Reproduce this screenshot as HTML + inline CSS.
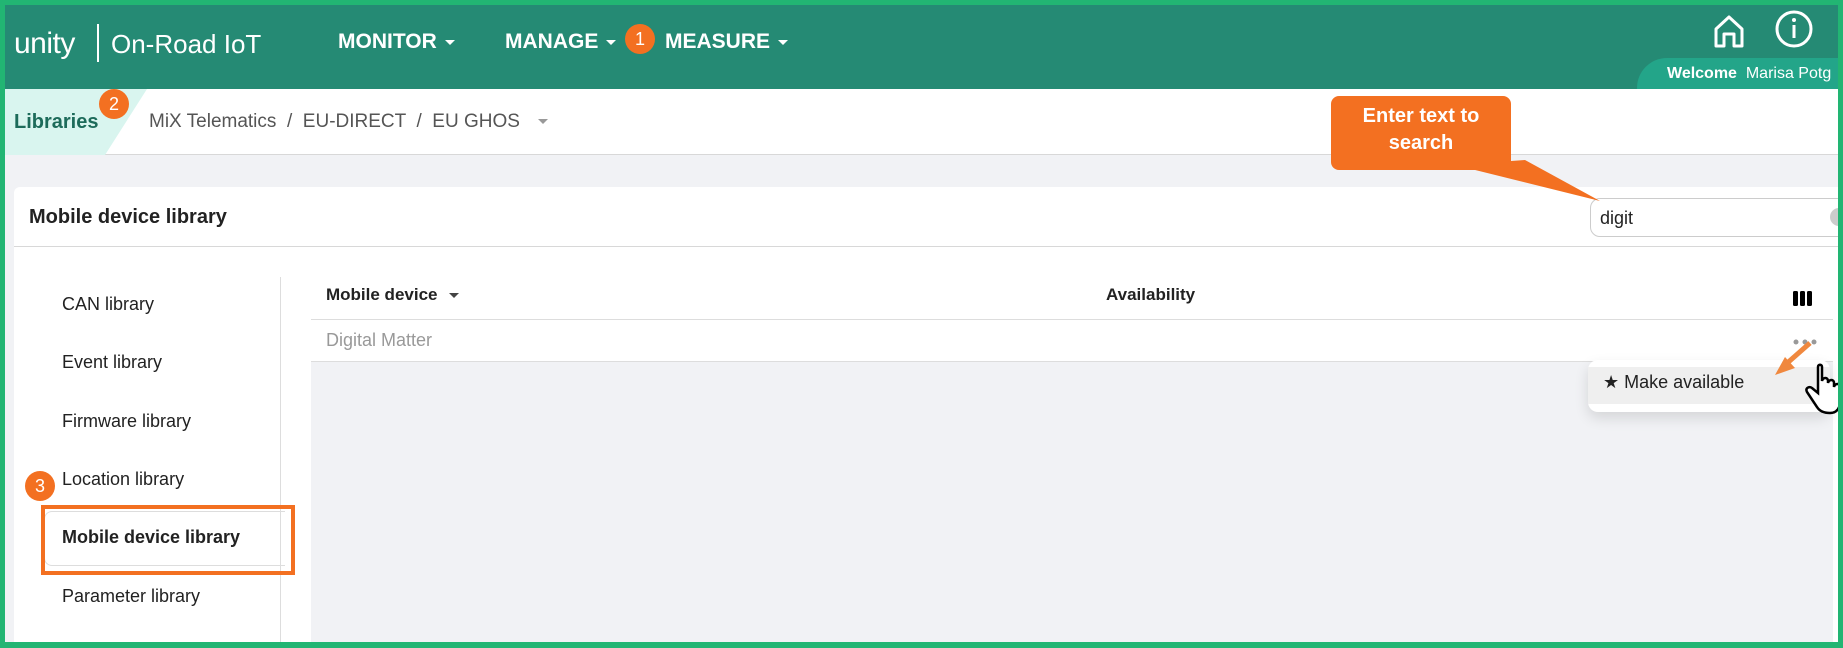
<!DOCTYPE html>
<html><head><meta charset="utf-8"><style>
*{margin:0;padding:0;box-sizing:border-box}
body{width:1843px;height:648px;overflow:hidden;background:#22b573;font-family:"Liberation Sans",sans-serif;position:relative}
.a{position:absolute}
#in{left:5px;top:5px;width:1833px;height:637px;background:#f1f2f5;overflow:hidden}
.hdr{left:0;top:0;width:1833px;height:84px;background:#258a74}
.nav{color:#fff;font-weight:bold;font-size:21px;top:25px}
.car{display:inline-block;border-left:5px solid transparent;border-right:5px solid transparent;border-top:5px solid #fff;vertical-align:middle;margin-left:8px}
.badge{width:30px;height:30px;border-radius:50%;background:#f37021;color:#fff;font-size:18px;text-align:center;line-height:30px}
.li{left:57px;font-size:18px;color:#222}
</style></head><body>
<div id="in" class="a">
<div class="a hdr"></div>
<div class="a" style="left:9px;top:22px;color:#fff;font-size:30px;letter-spacing:-0.5px">unity</div>
<div class="a" style="left:92px;top:19px;width:2px;height:38px;background:#fff"></div>
<div class="a" style="left:106px;top:24px;color:#fff;font-size:26px">On-Road IoT</div>
<div class="a nav" style="left:333px">MONITOR<span class="car"></span></div>
<div class="a nav" style="left:500px">MANAGE<span class="car"></span></div>
<div class="a badge" style="left:620px;top:19px">1</div>
<div class="a nav" style="left:660px">MEASURE<span class="car"></span></div>
<svg class="a" style="left:1706px;top:8px" width="36" height="36" viewBox="0 0 36 36"><path d="M5 16 L18 4 L31 16 V33 H23 V21 H13 V33 H5 Z" fill="none" stroke="#fff" stroke-width="3" stroke-linejoin="round"/></svg>
<svg class="a" style="left:1769px;top:4px" width="40" height="40" viewBox="0 0 40 40"><circle cx="20" cy="20" r="17" fill="none" stroke="#fff" stroke-width="3"/><rect x="18.5" y="16" width="3" height="13" fill="#fff"/><circle cx="20" cy="11" r="2" fill="#fff"/></svg>
<div class="a" style="left:1632px;top:53px;width:210px;height:32px;background:#23a589;border-top-left-radius:30px"></div>
<div class="a" style="left:1662px;top:60px;color:#fff;font-size:16px;white-space:nowrap"><b>Welcome</b>&nbsp; Marisa Potg</div>
<div class="a" style="left:0;top:84px;width:1833px;height:66px;background:#fff;border-bottom:1px solid #d8d8d8"></div>
<svg class="a" style="left:0;top:84px" width="150" height="66"><polygon points="0,0 142,0 100,66 0,66" fill="#d9f5ef"/></svg>
<div class="a" style="left:9px;top:106px;font-size:20px;font-weight:bold;color:#1d6b5a">Libraries</div>
<div class="a badge" style="left:94px;top:84px">2</div>
<div class="a" style="left:144px;top:106px;font-size:19px;color:#555;white-space:nowrap">MiX Telematics &nbsp;/&nbsp; EU-DIRECT &nbsp;/&nbsp; EU GHOS &nbsp;<span class="car" style="border-top-color:#999"></span></div>
<div class="a" style="left:9px;top:182px;width:1830px;height:470px;background:#fff;border-radius:6px"></div>
<div class="a" style="left:9px;top:241px;width:1830px;height:1px;background:#d8d8d8"></div>
<div class="a" style="left:24px;top:201px;font-size:20px;font-weight:bold;color:#222">Mobile device library</div>
<div class="a" style="left:1585px;top:193px;width:260px;height:39px;border:1px solid #ccc;border-radius:10px;background:#fff"></div>
<div class="a" style="left:1595px;top:203px;font-size:18px;color:#222">digit</div>
<div class="a" style="left:1825px;top:203px;width:18px;height:18px;border-radius:50%;background:#ccc"></div>
<svg class="a" style="left:1310px;top:85px" width="290" height="120"><polygon points="210,70 285,111 140,75" fill="#f37021"/><rect x="16" y="6" width="180" height="74" rx="8" fill="#f37021"/></svg>
<div class="a" style="left:1326px;top:98px;width:180px;text-align:center;color:#fff;font-weight:bold;font-size:20px;line-height:27px">Enter text to<br>search</div>
<div class="a" style="left:275px;top:272px;width:1px;height:370px;background:#ddd"></div>
<div class="a li" style="top:289px">CAN library</div>
<div class="a li" style="top:347px">Event library</div>
<div class="a li" style="top:406px">Firmware library</div>
<div class="a li" style="top:464px">Location library</div>
<div class="a" style="left:39px;top:506px;width:241px;height:55px;border:1px solid #ddd;border-right:none;border-radius:8px 0 0 8px"></div>
<div class="a li" style="top:522px;font-weight:bold">Mobile device library</div>
<div class="a li" style="top:581px">Parameter library</div>
<div class="a" style="left:36px;top:500px;width:254px;height:70px;border:4px solid #f37021"></div>
<div class="a badge" style="left:20px;top:466px">3</div>
<div class="a" style="left:306px;top:357px;width:1522px;height:290px;background:#f1f2f5"></div>
<div class="a" style="left:321px;top:280px;font-size:17px;font-weight:bold;color:#222">Mobile device<span class="car" style="border-top-color:#444;margin-left:12px"></span></div>
<div class="a" style="left:1101px;top:280px;font-size:17px;font-weight:bold;color:#222">Availability</div>
<svg class="a" style="left:1788px;top:286px" width="20" height="15"><rect x="0" y="0" width="5" height="15" rx="1.5"/><rect x="7" y="0" width="5" height="15" rx="1.5"/><rect x="14" y="0" width="5" height="15" rx="1.5"/></svg>
<div class="a" style="left:306px;top:314px;width:1522px;height:1px;background:#ddd"></div>
<div class="a" style="left:306px;top:315px;width:1522px;height:42px;background:#fff;border-bottom:1px solid #ddd"></div>
<div class="a" style="left:321px;top:325px;font-size:18px;color:#999">Digital Matter</div>
<svg class="a" style="left:1787px;top:333px" width="26" height="8"><circle cx="4" cy="4" r="2.5" fill="#999"/><circle cx="13" cy="4" r="2.5" fill="#999"/><circle cx="22" cy="4" r="2.5" fill="#999"/></svg>
<div class="a" style="left:1583px;top:355px;width:242px;height:52px;background:#fff;border-radius:10px;box-shadow:0 6px 14px rgba(0,0,0,.12)"></div>
<div class="a" style="left:1583px;top:362px;width:242px;height:37px;background:#efefef"></div>
<div class="a" style="left:1598px;top:367px;font-size:18px;color:#222">★ Make available</div>
<svg class="a" style="left:1740px;top:330px" width="100" height="80"><path d="M65 8 L40 30" stroke="#f0883e" stroke-width="5"/><polygon points="30,40 50,33 40,22" fill="#f0883e"/><path d="M73 32 V58 L67 53 C64 51 60 53 62 57 L72 72 C75 77 80 78 85 78 C92 78 95 73 95 66 V52 C95 48 90 48 89 52 V48 C89 44 84 44 83 48 V46 C83 42 78 42 77 46 V32 C77 29 73 29 73 32 Z" fill="#fff" stroke="#000" stroke-width="2.5"/></svg>
</div>
</body></html>
